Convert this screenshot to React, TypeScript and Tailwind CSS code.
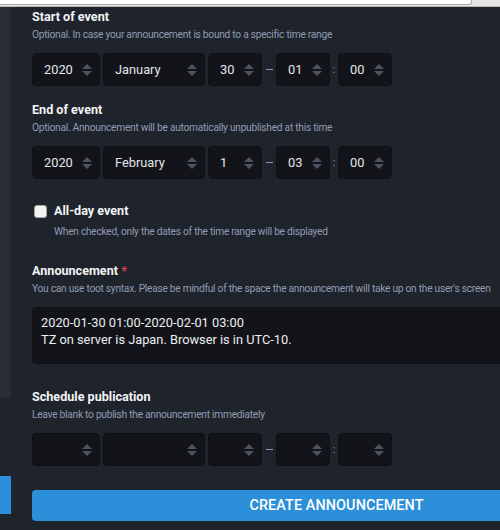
import React from 'react';

const font = { fontFamily: 'Roboto, "Liberation Sans", sans-serif' };

function Arrows() {
    return (
        <svg width="10" height="12" viewBox="0 0 10 12" className="shrink-0">
            <polygon points="0,5 5,0 10,5" fill="#4d5160" />
            <polygon points="0,7 10,7 5,12" fill="#4d5160" />
        </svg>
    );
}

function SelectBox({ value, width }: { value?: string; width: string }) {
    return (
        <div className={`${width} h-[33px] rounded-[4px] bg-[#131419] border border-[#0f1014] flex items-center justify-between pl-[11px] pr-[7px]`}>
            <span className="text-[12.8px] text-[#e4e6ea]">{value}</span>
            <Arrows />
        </div>
    );
}

function DateRow({ vals }: { vals: string[] }) {
    return (
        <div className="flex items-center mt-[9px]">
            <SelectBox value={vals[0]} width="w-[68px]" />
            <div className="w-[3px]" />
            <SelectBox value={vals[1]} width="w-[102px]" />
            <div className="w-[3px]" />
            <SelectBox value={vals[2]} width="w-[54px]" />
            <div className="w-[14px] flex justify-center">
                <div className="w-[7px] h-[1.5px] bg-[#8d9bb0]" />
            </div>
            <SelectBox value={vals[3]} width="w-[54px]" />
            <div className="w-[8px] flex justify-center text-[10px] text-[#8d9bb0]">:</div>
            <SelectBox value={vals[4]} width="w-[54px]" />
        </div>
    );
}

function Heading({ children, className = '' }: { children: React.ReactNode; className?: string }) {
    return <div className={`h-[18px] leading-[18px] text-[12.6px] font-bold text-[#f2f3f5] ${className}`}>{children}</div>;
}

function Hint({ children, className = '' }: { children: React.ReactNode; className?: string }) {
    return <div className={`h-[18px] leading-[18px] text-[10.2px] tracking-[-0.26px] text-[#8f9db3] whitespace-nowrap ${className}`}>{children}</div>;
}

export default function App() {
    return (
        <div className="w-[500px] h-[530px] overflow-hidden bg-[#1f232b] flex flex-col" style={font}>
            {/* browser chrome strip */}
            <div className="h-[7px] shrink-0 bg-[#e6e6e6] border-b border-[#b9b9b9]">
                <div className="w-[472px] h-[5px] bg-white border-r border-b border-[#a9a9a9] rounded-br-[3px]" />
            </div>

            <div className="flex flex-1">
                {/* sidebar edge */}
                <div className="w-[11px] shrink-0 flex flex-col">
                    <div className="h-[391px] bg-[#282c36]" />
                    <div className="h-[78px]" />
                    <div className="h-[38px] bg-[#2b90d9]" />
                </div>

                {/* form */}
                <div className="pl-[21px] pt-[1px] w-[630px] shrink-0">
                    <Heading>Start of event</Heading>
                    <Hint>Optional. In case your announcement is bound to a specific time range</Hint>
                    <DateRow vals={['2020', 'January', '30', '01', '00']} />

                    <Heading className="mt-[15px]">End of event</Heading>
                    <Hint>Optional. Announcement will be automatically unpublished at this time</Hint>
                    <DateRow vals={['2020', 'February', '1', '03', '00']} />

                    <div className="mt-[23px] flex items-center h-[18px]">
                        <div className="ml-[2px] w-[13px] h-[13px] rounded-[3px] bg-[#f3f3f3] border border-[#a8a8a8]" />
                        <div className="ml-[7px] text-[12.6px] font-bold text-[#f2f3f5] leading-[18px]">All-day event</div>
                    </div>
                    <Hint className="mt-[3px] pl-[22px]">When checked, only the dates of the time range will be displayed</Hint>

                    <Heading className="mt-[21px]">
                        Announcement <span className="text-[#df405a]">*</span>
                    </Heading>
                    <Hint>You can use toot syntax. Please be mindful of the space the announcement will take up on the user's screen</Hint>
                    <div className="mt-[9px] h-[57px] w-[609px] rounded-[4px] bg-[#131419] border border-[#0f1014] pl-[8px] pt-[6px] text-[12.8px] leading-[17px] text-[#eceef1]">
                        <div>2020-01-30 01:00-2020-02-01 03:00</div>
                        <div>TZ on server is Japan. Browser is in UTC-10.</div>
                    </div>

                    <Heading className="mt-[24px]">Schedule publication</Heading>
                    <Hint>Leave blank to publish the announcement immediately</Hint>
                    <DateRow vals={['', '', '', '', '']} />

                    <button className="mt-[24px] h-[31px] w-[609px] rounded-[4px] bg-[#2b90d9] text-white text-[14.4px] font-medium uppercase tracking-[0.1px] flex items-center justify-center">
                        Create announcement
                    </button>
                </div>
            </div>
        </div>
    );
}
